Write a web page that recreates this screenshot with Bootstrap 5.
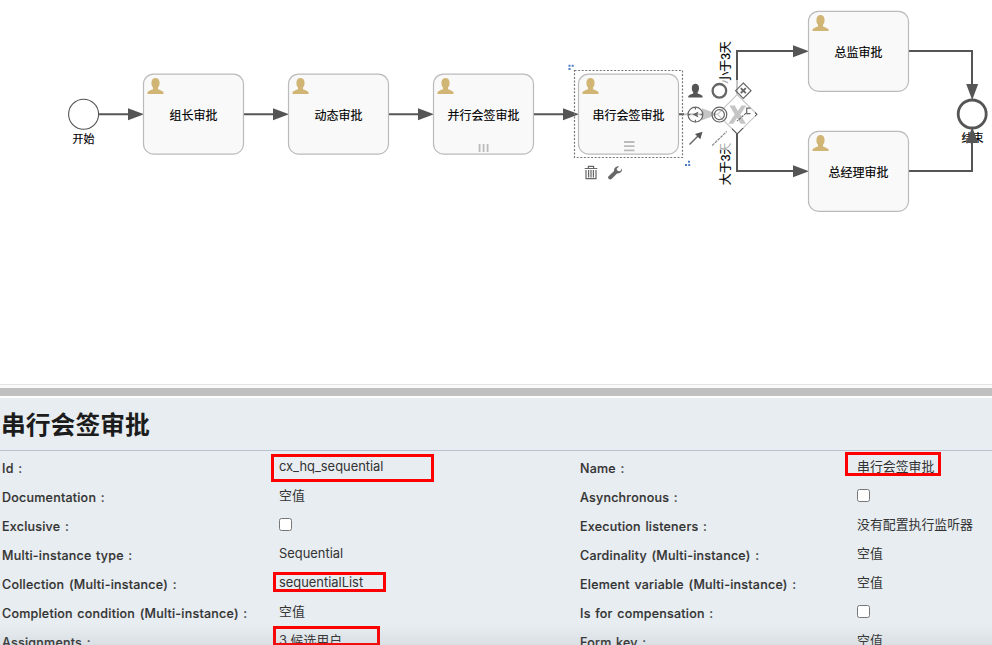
<!DOCTYPE html>
<html lang="zh-CN">
<head>
<meta charset="utf-8">
<meta name="viewport" content="width=device-width, initial-scale=1">
<title>流程设计器</title>
<link href="https://cdn.jsdelivr.net/npm/bootstrap@5.3.0/dist/css/bootstrap.min.css" rel="stylesheet">
<style>
body{font-family:Inter,"Noto Sans CJK SC",sans-serif;height:645px;color:#333}
.canvas{height:385px;border-bottom:1px solid #e4e4e4}
.canvas text{font-family:"Liberation Sans","Noto Sans CJK SC",sans-serif;font-size:12px;fill:#000;stroke:#000;stroke-width:.15px;font-weight:400;text-anchor:middle}
.splitter{height:13px;border-top:3px solid #fafafa;border-bottom:2px solid #fff;background:#c0c0c0}
.props{background:#e8edf1}
.props h1{height:53px;line-height:55px;padding-left:1px;font-size:24.8px;font-weight:700;color:#1c1c1c;border-bottom:1.5px solid #bac0cf}
.grid-rows{display:grid;grid-template-columns:277px 301px 277px 135px;grid-auto-rows:29px;padding:1px 0 0 2px}
.k,.v{line-height:29px;font-size:12.5px;white-space:nowrap}
.k{font-weight:500;letter-spacing:.23px;word-spacing:1px;padding-top:2px;-webkit-text-stroke:.15px #333}
.v{font-size:12.9px}
.v input{width:13px;height:13px;display:block;margin-top:8px;border:1px solid #777;border-radius:2.5px;appearance:none;background:#fff}
.hl{position:absolute;border:3px solid #f00}
.hl-id{left:271px;top:56px;width:163px;height:28px}
.hl-name{left:845px;top:54px;width:96px;height:24px}
.hl-list{left:273px;top:174px;width:113px;height:20px}
.hl-assign{left:273px;top:228px;width:107px;height:20px}
.shade{position:absolute;left:0;right:0;bottom:0;height:20px;background:linear-gradient(rgba(120,125,130,0),rgba(120,125,130,.12));pointer-events:none}
</style>
<script src="https://cdn.jsdelivr.net/npm/bootstrap@5.3.0/dist/js/bootstrap.bundle.min.js"></script>
</head>
<body class="d-flex flex-column overflow-hidden bg-white">
<main class="canvas flex-shrink-0">
<svg class="d-block" width="992" height="384" viewBox="0 0 992 384">
<defs>
<path id="user" d="M0 16V14.2C1.2 12.8 3.5 12.3 5.5 11.4V9.7C4.2 8.5 3.8 6.8 4 4.2 4.1 1.5 5.8 0 8 0s3.9 1.5 4 4.2c.2 2.6-.2 4.3-1.5 5.5v1.7c2 .9 4.3 1.4 5.5 2.8V16z"/>
<path id="head" d="M0-6 16 0 0 6z" fill="#555"/>
<g id="task"><rect x=".5" y=".5" width="100" height="80" rx="10" fill="#f9f9f9" stroke="#bbb" stroke-width="1.2"/><use href="#user" x="4.5" y="4.3" fill="#d1b575"/></g>
</defs>
<g fill="none" stroke="#555" stroke-width="2">
<path d="M99 114.3h30M244 114.3h30M389 114.3h30M534 114.3h30M679 114.3h24M737 94V51h60M737 134v37h60M909 51h63v35M909 171h63v-30"/>
</g>
<use href="#head" x="128" y="114.3"/><use href="#head" x="273" y="114.3"/><use href="#head" x="418" y="114.3"/><use href="#head" x="563" y="114.3"/><use href="#head" x="702" y="114.3"/><use href="#head" x="793" y="51.3"/><use href="#head" x="793" y="171.3"/>
<circle cx="83.6" cy="114.2" r="15" fill="#fff" stroke="#555" stroke-width="1.1"/>
<text x="83.6" y="142.5" style="font-size:11px">开始</text>
<circle cx="972.2" cy="114" r="14" fill="#fff" stroke="#555" stroke-width="2.8"/>
<text x="972.5" y="141.5" style="font-size:11px">结束</text>
<use href="#head" transform="translate(972.2 84)rotate(90)"/><use href="#head" transform="translate(972.2 143)rotate(-90)"/>
<use href="#task" x="143" y="73.6"/><use href="#task" x="288" y="73.6"/><use href="#task" x="433" y="73.6"/><use href="#task" x="578" y="73.6"/><use href="#task" x="808" y="10.8"/><use href="#task" x="808" y="130.8"/>
<text x="193.5" y="119.5">组长审批</text><text x="338.5" y="119.5">动态审批</text><text x="483.5" y="119.5">并行会签审批</text><text x="628.5" y="119.5">串行会签审批</text><text x="858.5" y="56.5">总监审批</text><text x="858.5" y="176.5">总经理审批</text>
<path d="M479.6 144v8M483.6 144v8M487.6 144v8M624 142h10.5M624 146.2h10.5M624 150.4h10.5" stroke="#bbb" stroke-width="1.8"/>
<rect x="574.5" y="70.5" width="108" height="87" fill="none" stroke="#777" stroke-width="1.2" stroke-dasharray="2 1.6"/>
<path d="M568.5 65.8h5.5M568.5 69h2" stroke="#4b7dc0" stroke-width="2" stroke-dasharray="2 1.2"/>
<path d="M685 165h6M688 161.8h3" stroke="#4b7dc0" stroke-width="2" stroke-dasharray="2 1.2"/>
<path d="m717.5 114.3 19.7-19.7 19.7 19.7-19.7 19.7z" fill="#fff" stroke="#555" stroke-width="1.1"/>
<path d="M729.5 105.5h5.3l3.1 5.4 3.6-5.4h4.8l-6 8.9 5.7 9.4h-5.4l-3.5-6-3.8 6h-5.1l6.5-9.4z" fill="#555"/>
<text transform="translate(730.2 62.5)rotate(-90)">小于3天</text>
<text transform="translate(730.2 164)rotate(-90)">大于3天</text>
<!-- translucent pad behind the context actions -->
<path d="M684 80h71v48h-23v22h-48z" fill="#fff" fill-opacity=".66"/>
<use href="#user" transform="translate(688.3 83.7)scale(.89 .87)" fill="#555"/>
<g fill="none" stroke="#666">
<circle cx="719.4" cy="90.8" r="6.8" stroke-width="2.3"/>
<path d="m743.3 83 7.7 7.7-7.7 7.7-7.7-7.7z" stroke-width="1.2"/>
<path d="M740.8 88.2l5 5m0-5-5 5" stroke-width="1.9"/>
<circle cx="695.4" cy="114.6" r="7.4" stroke-width="1.2"/>
<path d="M695.4 107v2.5M695.4 119.7v2.5M687.8 114.6h2.5M700.5 114.6h2.5" stroke-width="1.2"/>
<path d="m692.5 114.6 6-3.2-1.2 3.2 1.2 3z" fill="#666" stroke="none"/>
<circle cx="719.4" cy="114.6" r="7.4" stroke-width="1.2"/><circle cx="719.4" cy="114.6" r="5" stroke-width="1.2"/>
<path d="M750.5 108.2h-3.8v5.4h3.8" stroke-width="1.2"/>
<path d="m746 113.2-9 8" stroke-width="1.1" stroke-dasharray="2.5 1"/>
<path d="m689.5 144.5 9-9" stroke-width="1.5"/><path d="m702.5 131.8-2.2 7.5-5.3-5.3z" fill="#555" stroke="none"/>
<path d="m712.2 145.5 14.5-14" stroke="#888" stroke-width="1.2" stroke-dasharray="3 .8"/>
<path d="M584.7 168.5h12.6M588.4 168v-1.6h5.2v1.6M586 170v8.6h10V170M588.6 170v7.5M591 170v7.5M593.4 170v7.5" stroke-width="1.2"/>
</g>
<path d="M608.3 178.2c-.7-1 0-1.8.8-2.5l5-4.6c-.4-2.8 1.8-5 5-4.8l-2.6 2.7 1.3 2 2.3.2 1.8-2.6c.6 3-1.7 5.4-4.8 4.9l-5.3 5.3c-1.1 1-2.5 1-3.5-.6z" fill="#666"/>
</svg>
</main>
<div class="splitter flex-shrink-0"></div>
<section class="props flex-grow-1 position-relative overflow-hidden">
<h1 class="m-0">串行会签审批</h1>
<div class="grid-rows">
<div class="k">Id :</div><div class="v">cx_hq_sequential</div><div class="k">Name :</div><div class="v">串行会签审批</div>
<div class="k">Documentation :</div><div class="v">空值</div><div class="k">Asynchronous :</div><div class="v"><input type="checkbox"></div>
<div class="k">Exclusive :</div><div class="v"><input type="checkbox"></div><div class="k">Execution listeners :</div><div class="v">没有配置执行监听器</div>
<div class="k">Multi-instance type :</div><div class="v">Sequential</div><div class="k">Cardinality (Multi-instance) :</div><div class="v">空值</div>
<div class="k">Collection (Multi-instance) :</div><div class="v">sequentialList</div><div class="k">Element variable (Multi-instance) :</div><div class="v">空值</div>
<div class="k">Completion condition (Multi-instance) :</div><div class="v">空值</div><div class="k">Is for compensation :</div><div class="v"><input type="checkbox"></div>
<div class="k">Assignments :</div><div class="v">3 候选用户</div><div class="k">Form key :</div><div class="v">空值</div>
</div>
<span class="hl hl-id"></span><span class="hl hl-name"></span><span class="hl hl-list"></span><span class="hl hl-assign"></span>
<div class="shade"></div>
</section>
</body>
</html>
